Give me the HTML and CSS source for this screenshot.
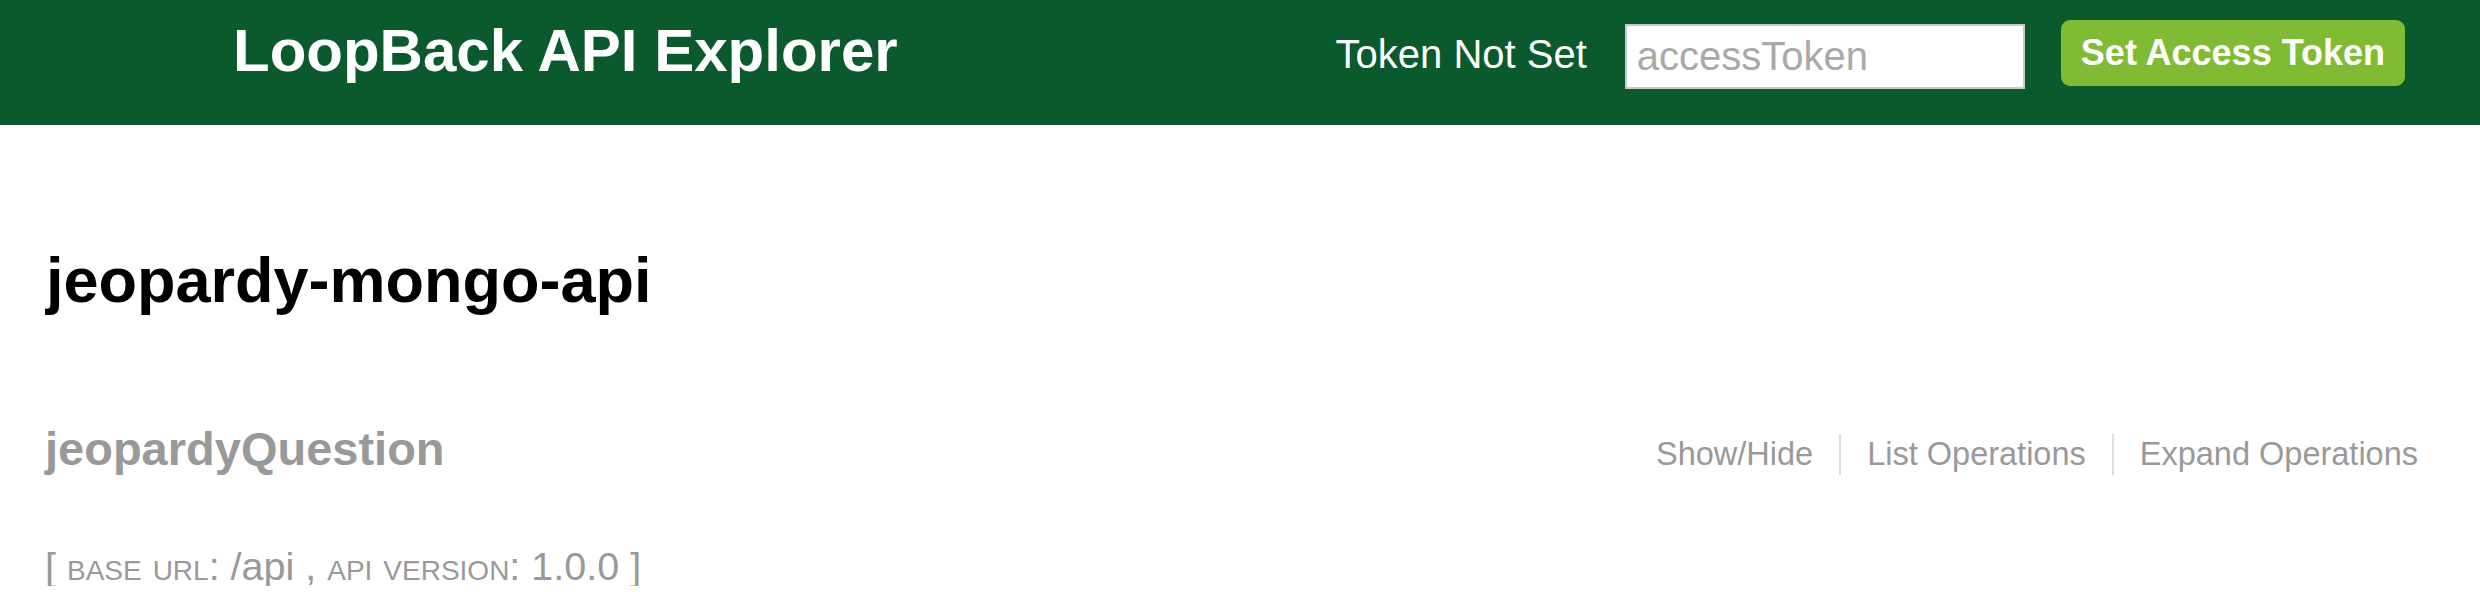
FILE: index.html
```html
<!DOCTYPE html>
<html>
<head>
<meta charset="utf-8">
<title>LoopBack API Explorer</title>
<link rel="stylesheet" href="styles.css">
</head>
<body>
<header class="header">
  <a class="logo" href="#">LoopBack API Explorer</a>
  <form class="token-form">
    <span class="token-status">Token Not Set</span>
    <input class="token-input" type="text" placeholder="accessToken">
    <button class="token-btn" type="button">Set Access Token</button>
  </form>
</header>
<main class="content">
  <h1 class="api-title">jeopardy-mongo-api</h1>
  <div class="resource">
    <h2 class="resource-name">jeopardyQuestion</h2>
    <ul class="options">
      <li>Show/Hide</li>
      <li>List Operations</li>
      <li>Expand Operations</li>
    </ul>
  </div>
  <h4 class="footer-info">[ <span class="sc">base url</span>: /api , <span class="sc">api version</span>: 1.0.0 ]</h4>
</main>
</body>
</html>
```
FILE: styles.css
```css
* { box-sizing: border-box; }
html, body { margin: 0; padding: 0; background: #fff; }
body { font-family: "Liberation Sans", Arial, sans-serif; }

.header {
  display: flex;
  align-items: flex-start;
  height: 125px;
  padding: 0 75px 0 233px;
  background: #0a5a2e;
}
.logo {
  margin-top: 21px;
  font-size: 60px;
  line-height: 60px;
  font-weight: bold;
  color: #fff;
  text-decoration: none;
}
.token-form {
  display: flex;
  align-items: flex-start;
  margin: 20px 0 0 auto;
}
.token-status {
  margin-top: 14px;
  font-size: 40px;
  line-height: 40px;
  color: #fff;
}
.token-input {
  margin: 4px 0 0 38px;
  width: 400px;
  height: 65px;
  padding: 0 10px;
  border: 2px solid #c9c9c9;
  background: #fff;
  font-family: "Liberation Sans", Arial, sans-serif;
  font-size: 40px;
  color: #333;
  outline: none;
}
.token-input::placeholder { color: #a9a9a9; }
.token-btn {
  margin-left: 36px;
  height: 66px;
  padding: 0 20px;
  border: 0;
  border-radius: 9px;
  background: #7fbc33;
  color: #fff;
  font-family: "Liberation Sans", Arial, sans-serif;
  font-size: 36px;
  font-weight: bold;
}

.content { padding: 0 62px 0 45px; }
.api-title {
  margin: 124px 0 0 1px;
  font-size: 63px;
  line-height: 63px;
  font-weight: bold;
  color: #000;
}
.resource {
  display: flex;
  align-items: baseline;
  justify-content: space-between;
  margin-top: 113px;
}
.resource-name {
  margin: 0;
  font-size: 47px;
  line-height: 47px;
  font-weight: bold;
  color: #999;
}
.options {
  display: flex;
  align-items: baseline;
  margin: 0;
  padding: 0;
  list-style: none;
}
.options li {
  padding: 0 26px;
  font-size: 32.5px;
  line-height: 41px;
  color: #999;
  border-right: 2px solid #ddd;
}
.options li:last-child { border-right: 0; padding-right: 0; }
.footer-info {
  margin: 71px 0 0;
  font-size: 39.5px;
  line-height: 40px;
  font-weight: normal;
  color: #999;
}
.sc { font-variant: small-caps; }
```
